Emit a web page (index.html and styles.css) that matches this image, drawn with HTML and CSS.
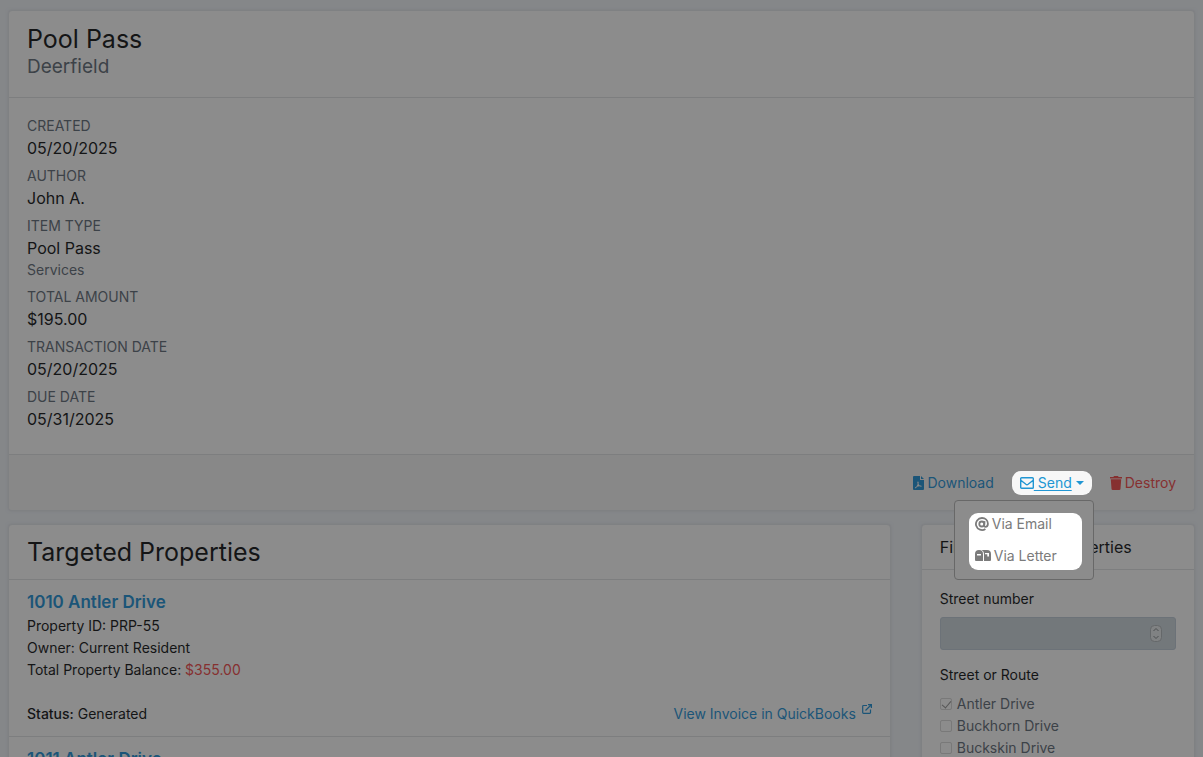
FILE: index.html
```
<!DOCTYPE html>
<html lang="en">
<head>
    <meta charset="UTF-8">
    <meta name="viewport" content="width=device-width, initial-scale=1.0">
    <title>Pool Pass - Deerfield</title>
    <link rel="stylesheet" href="styles.css">
</head>
<body>
    <main class="page">
        <section class="card invoice">
            <header class="card-header invoice-header">
                <h1>Pool Pass</h1>
                <p class="subtitle">Deerfield</p>
            </header>

            <dl class="details">
                <dt>Created</dt>
                <dd>05/20/2025</dd>
                <dt>Author</dt>
                <dd>John A.</dd>
                <dt>Item Type</dt>
                <dd>Pool Pass <small>Services</small></dd>
                <dt>Total Amount</dt>
                <dd>$195.00</dd>
                <dt>Transaction Date</dt>
                <dd>05/20/2025</dd>
                <dt>Due Date</dt>
                <dd>05/31/2025</dd>
            </dl>

            <footer class="card-footer">
                <a href="#" class="action">
                    <svg class="icon-file" viewBox="0 0 11 14"><path fill-rule="evenodd" d="M1 0h6v4h4v9a1 1 0 0 1-1 1H1a1 1 0 0 1-1-1V1a1 1 0 0 1 1-1zM8 0l3 3H8zM5 5.500c-.9 0-.8 1.300-.3 2.500-.4 1-.8 1.800-1.200 2.500-1.200.6-1.700 1.200-1.400 1.600.6.600 1.300-.2 2-1.300.8-.3 1.600-.5 2.300-.6 1 .6 2.300.7 2.400 0 .1-.7-1-.9-2.100-.8-.4-.4-.9-1-1.200-1.600.3-1.100.3-2.300-.5-2.300z"/></svg>
                    Download
                </a>
                <div class="dropdown">
                    <button type="button" class="send" aria-expanded="true" aria-controls="send-menu">
                        <svg class="icon-mail" viewBox="0 0 14 12"><path d="M1.600.7h10.800a.9.900 0 0 1 .9.900v8.800a.9.900 0 0 1-.9.900H1.600a.9.900 0 0 1-.9-.9V1.600a.9.900 0 0 1 .9-.9zM.8 3.200l5.100 4.100q1.100.8 2.200 0l5.100-4.100"/></svg><span class="send-label">&nbsp;Send</span>
                        <svg class="icon-caret" viewBox="0 0 8 4"><path d="M0 0h8L4 4z"/></svg>
                    </button>
                    <div class="menu" id="send-menu">
                        <div class="menu-items">
                            <a href="#">
                                <svg class="icon-at" viewBox="0 0 14 14"><circle cx="6.800" cy="7" r="2.500"/><path d="M9.600 4.200l-.5 4c-.1 1 .4 1.600 1.300 1.600 1.500 0 2.500-1.200 2.500-3C12.900 3.200 10.300 1 7 1a6 6 0 1 0 3.400 10.900"/></svg>
                                Via Email
                            </a>
                            <a href="#">
                                <svg class="icon-mailbox" viewBox="0 0 16 12"><path fill-rule="evenodd" d="M4 0a4 4 0 0 1 4 4v7H1a1 1 0 0 1-1-1V4a4 4 0 0 1 4-4zM2 4v1.500h4V4zM6.600 0H12a4 4 0 0 1 4 4v6a1 1 0 0 1-1 1H9V4C9 2.200 8 .7 6.600 0zM10 3v1.300h2.300v2.200H14V3z"/></svg>
                                Via Letter
                            </a>
                        </div>
                    </div>
                </div>
                <a href="#" class="action danger">
                    <svg class="icon-trash" viewBox="0 0 12 14"><path d="M4 0h4l.6 1H12v1.500H0V1h3.400zM.8 3.300h10.400l-.7 9.400a1.300 1.300 0 0 1-1.300 1.300H2.800a1.300 1.300 0 0 1-1.300-1.300z"/></svg>
                    Destroy
                </a>
            </footer>
        </section>

        <section class="card properties">
            <header class="card-header">
                <h2>Targeted Properties</h2>
            </header>
            <article class="property">
                <h3><a href="#">1010 Antler Drive</a></h3>
                <p>Property ID: PRP-55</p>
                <p>Owner: Current Resident</p>
                <p>Total Property Balance: <span class="balance">$355.00</span></p>
                <div class="property-status">
                    <span><strong>Status:</strong> Generated</span>
                    <a href="#">View Invoice in QuickBooks
                        <svg class="icon-external" viewBox="0 0 10 10"><path d="M5 1.500H1.500a.8.800 0 0 0-.8.800v6.200a.8.800 0 0 0 .8.800h6.200a.8.800 0 0 0 .8-.8V5.500M3.500 6.500l5.500-5.500M6 .6h3.400V4"/></svg>
                    </a>
                </div>
            </article>
            <article class="property">
                <h3><a href="#">1011 Antler Drive</a></h3>
            </article>
        </section>

        <aside class="card filters">
            <header class="card-header">
                <h4>Filter Targeted Properties</h4>
            </header>
            <form class="filter-form">
                <label class="field-label" for="street-number">Street number</label>
                <div class="number-field">
                    <input type="number" id="street-number" disabled>
                    <svg class="icon-stepper" viewBox="0 0 12 17"><rect x=".5" y=".5" width="11" height="16" rx="4"/><path d="M3.500 6L6 3.500 8.500 6M3.500 11L6 13.500 8.500 11"/></svg>
                </div>
                <fieldset>
                    <legend>Street or Route</legend>
                    <label class="check"><input type="checkbox" checked disabled> Antler Drive</label>
                    <label class="check"><input type="checkbox" disabled> Buckhorn Drive</label>
                    <label class="check"><input type="checkbox" disabled> Buckskin Drive</label>
                </fieldset>
            </form>
        </aside>
    </main>
</body>
</html>
```
FILE: styles.css
```
* {
    box-sizing: border-box;
}
body {
    margin: 0;
    height: 100vh;
    overflow: hidden;
    background-color: #858789;
    color: #141516;
    font-family: Inter, sans-serif;
    font-size: 14px;
    line-height: 22px;
}
h1, h2, h3, h4, p, dl, dd {
    margin: 0;
    font-weight: 400;
}
a {
    color: #1b5578;
    text-decoration: none;
}
svg {
    fill: currentColor;
}

/* Layout */
.page {
    display: grid;
    grid-template-columns: repeat(12, 1fr);
    gap: 13px 30px;
    padding: 10px 8px 0;
}
.invoice {
    grid-column: span 12;
}
.properties {
    grid-column: span 9;
}
.filters {
    grid-column: span 3;
}

/* Cards */
.card {
    background-color: #8c8c8c;
    border: 1px solid #7f8183;
    border-radius: 4px;
    box-shadow: 0 0 3px #7b7d80;
}
.card-header {
    padding: 12px 18px;
    border-bottom: 1px solid #7d7e7f;
}
.invoice-header {
    padding: 13px 18px 17px;
}
h1, h2 {
    font-size: 25px;
    line-height: 30px;
}
.subtitle {
    color: #3c4248;
    font-size: 19px;
    line-height: 26px;
}
.card-footer {
    display: flex;
    justify-content: flex-end;
    align-items: center;
    gap: 18px;
    padding: 16px 18px 15px;
    border-top: 1px solid #7d7e7f;
    background-color: #888888;
    border-radius: 0 0 4px 4px;
}

/* Invoice details */
.details {
    padding: 17px 18px 18px;
}
dt {
    color: #3c4248;
    text-transform: uppercase;
}
dd {
    margin-bottom: 6px;
    font-size: 16px;
}
dd small {
    display: block;
    color: #3c4248;
    font-size: 14px;
    line-height: 21px;
}

/* Actions */
.action {
    display: flex;
    align-items: center;
    gap: 3px;
}
.danger, .balance {
    color: #863030;
}
.icon-file {
    width: 11px;
    height: 14px;
}
.icon-trash {
    width: 12px;
    height: 14px;
}
.dropdown {
    position: relative;
}
.send {
    display: flex;
    align-items: center;
    height: 24px;
    padding: 0 8px;
    border: none;
    border-radius: 9px;
    background-color: #f7f7f7;
    color: #2196d3;
    font: inherit;
    cursor: pointer;
}
.send-label {
    text-decoration: underline;
    text-underline-offset: 2px;
}
.icon-mail {
    width: 14px;
    height: 12px;
    fill: none;
    stroke: currentColor;
    stroke-width: 1.4;
}
.icon-caret {
    width: 8px;
    height: 4px;
    margin-left: 4px;
}
.menu {
    position: absolute;
    top: 29px;
    right: -2px;
    z-index: 1;
    width: 140px;
    padding: 12px 11px 9px 14px;
    border: 1px solid #686868;
    border-radius: 4px;
    background-color: #8c8c8c;
}
.menu-items {
    display: grid;
    gap: 10px;
    padding: 0 6px 3px;
    border-radius: 9px;
    background-color: #ffffff;
}
.menu-items a {
    display: flex;
    align-items: center;
    gap: 3px;
    color: #7b7b7b;
}
.icon-at {
    width: 14px;
    height: 14px;
    fill: none;
    stroke: currentColor;
    stroke-width: 1.8;
}
.icon-mailbox {
    width: 16px;
    height: 12px;
}

/* Properties */
.property {
    padding: 10px 18px 11px;
    border-bottom: 1px solid #7d7e7f;
}
.property h3 {
    margin-bottom: 1px;
    font-size: 17px;
    font-weight: 600;
    line-height: 24px;
}
.property-status {
    display: flex;
    justify-content: space-between;
    padding-top: 22px;
}
.property-status strong {
    font-weight: 500;
}
.icon-external {
    width: 10px;
    height: 10px;
    margin-left: 2px;
    vertical-align: 5px;
    fill: none;
    stroke: currentColor;
    stroke-width: 1.2;
}

/* Filters */
h4 {
    font-size: 16px;
    line-height: 20px;
}
.filter-form {
    padding: 18px;
}
.field-label {
    display: block;
    margin-bottom: 7px;
}
.number-field {
    display: flex;
    align-items: center;
    justify-content: flex-end;
    height: 33px;
    margin-bottom: 14px;
    padding-right: 13px;
    border: 1px solid #6c7278;
    border-radius: 3px;
    background-color: #73787b;
}
.number-field input {
    flex: 1;
    min-width: 0;
    border: none;
    background: none;
    appearance: textfield;
}
.icon-stepper {
    width: 12px;
    height: 17px;
    fill: #808283;
    stroke: #65686a;
}
.icon-stepper path {
    fill: none;
    stroke: #4c4f51;
}
fieldset {
    margin: 0;
    padding: 0;
    border: none;
}
legend {
    margin-bottom: 7px;
    padding: 0;
}
.check {
    display: flex;
    align-items: center;
    gap: 5px;
    color: #3c4248;
}
.check input {
    width: 12px;
    height: 12px;
    margin: 0;
    border: 1px solid #797979;
    border-radius: 2px;
    appearance: none;
}
.check input:checked::before {
    content: "";
    display: block;
    width: 4px;
    height: 8px;
    margin-left: 3px;
    border: solid #565656;
    border-width: 0 1px 1px 0;
    transform: rotate(40deg);
}
```
